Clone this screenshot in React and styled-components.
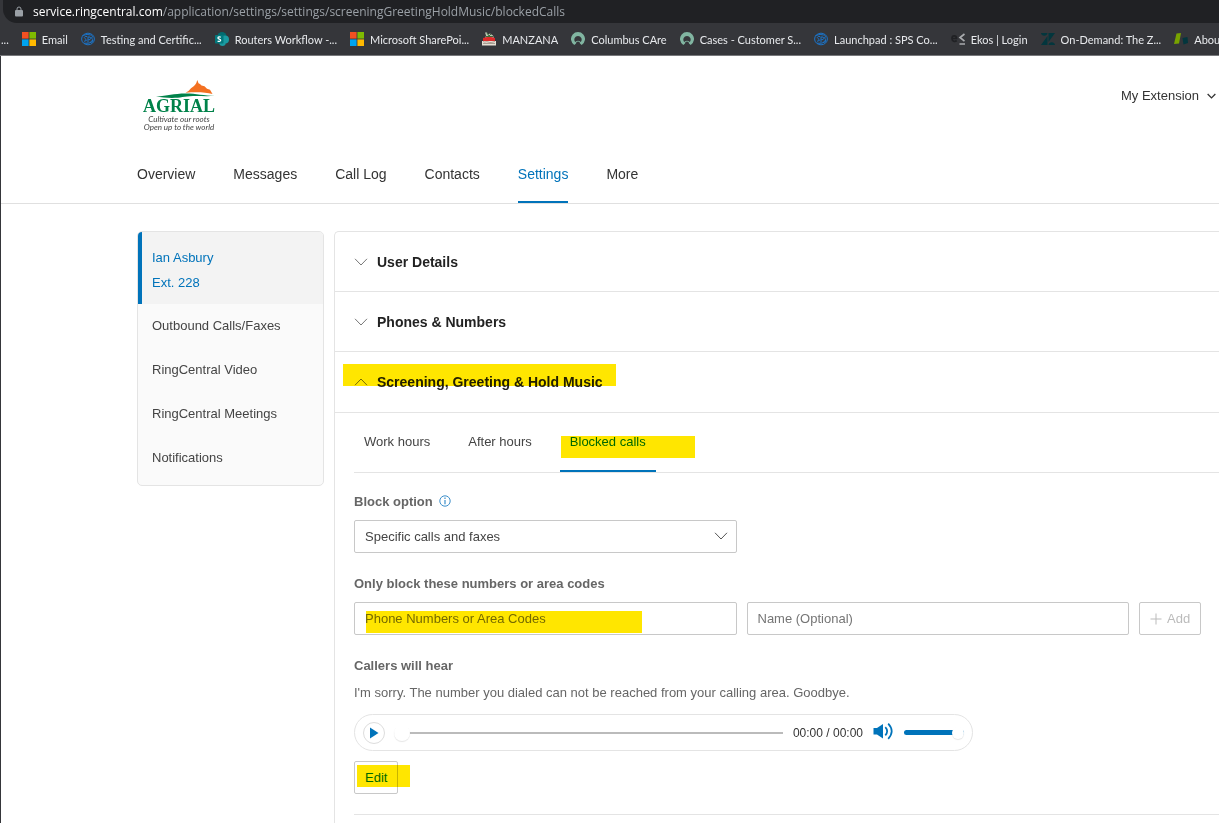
import React, { useState } from "react";
import styled, { createGlobalStyle, css } from "styled-components";

const bookmarks = [
  { label: "Email", icon: "microsoft" },
  { label: "Testing and Certific...", icon: "sps" },
  { label: "Routers Workflow -...", icon: "sharepoint" },
  { label: "Microsoft SharePoi...", icon: "microsoft" },
  { label: "MANZANA", icon: "cake" },
  { label: "Columbus CAre", icon: "ring" },
  { label: "Cases - Customer S...", icon: "ring" },
  { label: "Launchpad : SPS Co...", icon: "sps" },
  { label: "Ekos | Login", icon: "ekos" },
  { label: "On-Demand: The Z...", icon: "zendesk" },
  { label: "Abou", icon: "leaf" },
];

const navItems = [
  "Overview",
  "Messages",
  "Call Log",
  "Contacts",
  "Settings",
  "More",
];

const sideItems = [
  "Outbound Calls/Faxes",
  "RingCentral Video",
  "RingCentral Meetings",
  "Notifications",
];

const tabs = ["Work hours", "After hours", "Blocked calls"];

const App = () => {
  const [tab, setTab] = useState("Blocked calls");
  const [position, setPosition] = useState(0);
  const [volume, setVolume] = useState(100);

  return (
    <>
      <GlobalStyle />
      <BrowserBar>
        <AddressBar>
          <LockIcon />
          <span>
            <Host>service.ringcentral.com</Host>
            /application/settings/settings/screeningGreetingHoldMusic/blockedCalls
          </span>
        </AddressBar>
        <Bookmarks>
          <span>...</span>
          {bookmarks.map(({ label, icon }) => (
            <Bookmark href="#" key={label}>
              <BookmarkIcon name={icon} />
              {label}
            </Bookmark>
          ))}
        </Bookmarks>
      </BrowserBar>
      <Page>
        <Header>
          <HeaderTop>
            <Logo />
            <ExtensionButton type="button">
              My Extension
              <Chevron width={9} height={6} strokeWidth={1.3} />
            </ExtensionButton>
          </HeaderTop>
          <Nav>
            {navItems.map((item) => (
              <NavLink href="#" key={item} $active={item === "Settings"}>
                {item}
              </NavLink>
            ))}
          </Nav>
        </Header>
        <Content>
          <Sidebar>
            <CurrentUser href="#">
              Ian Asbury
              <br />
              Ext. 228
            </CurrentUser>
            {sideItems.map((item) => (
              <SideLink href="#" key={item}>
                {item}
              </SideLink>
            ))}
          </Sidebar>
          <Panel>
            <SectionButton type="button">
              <Chevron />
              User Details
            </SectionButton>
            <SectionButton type="button">
              <Chevron />
              Phones &amp; Numbers
            </SectionButton>
            <SectionButton type="button" aria-expanded="true" $open>
              <Chevron up />
              Screening, Greeting &amp; Hold Music
              <Marker $left={8} $top={12} $width={273} />
            </SectionButton>
            <SectionBody>
              <Tabs role="tablist">
                {tabs.map((item) => (
                  <Tab
                    type="button"
                    role="tab"
                    key={item}
                    aria-selected={item === tab}
                    $active={item === tab}
                    onClick={() => setTab(item)}
                  >
                    {item}
                    {item === "Blocked calls" && (
                      <Marker $left={1} $top={23} $width={134} />
                    )}
                  </Tab>
                ))}
              </Tabs>
              <Form onSubmit={(e) => e.preventDefault()}>
                <LabelRow>
                  <Label htmlFor="block-option">Block option</Label>
                  <InfoIcon />
                </LabelRow>
                <FieldRow>
                  <SelectBox>
                    <Select id="block-option" defaultValue="specific">
                      <option value="specific">Specific calls and faxes</option>
                      <option value="all">All calls and faxes</option>
                    </Select>
                    <Chevron />
                  </SelectBox>
                </FieldRow>
                <LabelRow>
                  <Label htmlFor="numbers">
                    Only block these numbers or area codes
                  </Label>
                </LabelRow>
                <FieldRow>
                  <InputBox>
                    <Input
                      id="numbers"
                      placeholder="Phone Numbers or Area Codes"
                    />
                    <Marker $left={12} $top={9} $width={276} />
                  </InputBox>
                  <InputBox>
                    <Input
                      aria-label="Name (Optional)"
                      placeholder="Name (Optional)"
                    />
                  </InputBox>
                  <Button type="submit" disabled>
                    <PlusIcon />
                    Add
                  </Button>
                </FieldRow>
                <LabelRow>
                  <Label as="h3">Callers will hear</Label>
                </LabelRow>
                <Message>
                  I'm sorry. The number you dialed can not be reached from your
                  calling area. Goodbye.
                </Message>
                <Player>
                  <PlayButton type="button" aria-label="Play">
                    <svg width="10" height="12" viewBox="0 0 10 12">
                      <path d="M1 0.5 9.5 6 1 11.5Z" fill="#0073ba" />
                    </svg>
                  </PlayButton>
                  <SeekSlider
                    type="range"
                    aria-label="Position"
                    value={position}
                    onChange={(e) => setPosition(+e.target.value)}
                  />
                  <Time>00:00 / 00:00</Time>
                  <VolumeIcon />
                  <VolumeSlider
                    type="range"
                    aria-label="Volume"
                    value={volume}
                    onChange={(e) => setVolume(+e.target.value)}
                  />
                </Player>
                <Button type="button">
                  Edit
                  <Marker $left={2} $top={3} $width={53} />
                </Button>
              </Form>
              <Divider />
            </SectionBody>
          </Panel>
        </Content>
      </Page>
    </>
  );
};

export default App;

const Chevron = ({ up, width = 14, height = 8, strokeWidth = 1 }) => (
  <svg
    width={width}
    height={height}
    viewBox="0 0 14 8"
    fill="none"
    stroke="currentColor"
    strokeWidth={(strokeWidth * 14) / width}
    aria-hidden="true"
  >
    <path d={up ? "M1 7.2 7 1l6 6.2" : "M1 0.8 7 7l6-6.2"} />
  </svg>
);

const LockIcon = () => (
  <svg width="8" height="11" viewBox="0 0 8 11" aria-hidden="true">
    <path d="M2 5V3a2 2 0 0 1 4 0v2" fill="none" stroke="#9aa0a6" />
    <rect y="4" width="8" height="6.5" rx="1" fill="#9aa0a6" />
  </svg>
);

const PlusIcon = () => (
  <svg width="12" height="12" viewBox="0 0 12 12" aria-hidden="true">
    <path d="M6 0.5v11M0.5 6h11" stroke="currentColor" />
  </svg>
);

const InfoIcon = () => (
  <svg width="12" height="12" viewBox="0 0 12 12" aria-hidden="true">
    <circle cx="6" cy="6" r="5.2" fill="none" stroke="#3d8fca" />
    <path d="M6 2.6v1.3M6 5v4.2" stroke="#3d8fca" strokeWidth="1.2" />
  </svg>
);

const VolumeIcon = () => (
  <svg width="21" height="22" viewBox="0 0 21 22" aria-hidden="true">
    <path d="M0.5 6h3.5L10 2v14.5L4 12.5H0.5Z" fill="#0073ba" />
    <path
      d="M12.3 5.2q3.7 4 0 8.2M15.2 1.7q7 7.5 0 15.2"
      fill="none"
      stroke="#0073ba"
      strokeWidth="1.7"
    />
  </svg>
);

const Logo = () => (
  <svg width="76" height="54" viewBox="0 0 76 54" role="img" aria-label="Agrial">
    <path
      d="M44.5 12.8 47.5 11 50 8.3 53 6l1.5-1.8.8-1.2L56.3 0l1.2 3.300 1.500.7L60.500 5.500l3 .7 2.500 2.500 3 1 2.500 4.200c-7-1.600-16-2-27-1.100Z"
      fill="#f37021"
    />
    <path
      d="M15 16.5c12-.5 17-3 30-3 10 0 18 2.3 29 2.3-8 .8-15 0-22 .2-9 .4-12 1.9-21 1.9-6 0-11-.5-16-1.4Z"
      fill="#00824a"
    />
    <LogoName x="38" y="32">
      AGRIAL
    </LogoName>
    <LogoTagline x="38" y="42">
      Cultivate our roots
    </LogoTagline>
    <LogoTagline x="38" y="50">
      Open up to the world
    </LogoTagline>
  </svg>
);

const bookmarkDrawings = {
  microsoft: (
    <>
      <path d="M0 0h6.6v6.6H0Z" fill="#f25022" />
      <path d="M7.4 0H14v6.6H7.4Z" fill="#7fba00" />
      <path d="M0 7.4h6.6V14H0Z" fill="#00a4ef" />
      <path d="M7.4 7.4H14V14H7.4Z" fill="#ffb900" />
    </>
  ),
  sps: (
    <g fill="none" stroke="#1b74c9" strokeWidth="1">
      <ellipse cx="7" cy="7" rx="6.4" ry="5.8" />
      <path d="M6.3 4.5H4.2Q2.5 5.5 4 6.6t1.5 1.8L3 9.3M7 10.5V5h2q1.5 1.3 0 2.6H7.3M12 4.500q-2 .4-1.200 1.700T12 8.200L9.500 9.800" />
      <path d="M1.5 3.5Q6 1.5 11 3.2M3 11.3q5 .6 9-1.8" />
    </g>
  ),
  sharepoint: (
    <>
      <circle cx="7" cy="4.5" r="4.5" fill="#036c70" />
      <circle cx="10" cy="7.5" r="4" fill="#1a9ba1" />
      <circle cx="7.5" cy="10.8" r="3.2" fill="#1a9ba1" />
      <rect y="3" width="8.5" height="8.5" rx="0.8" fill="#03787c" />
      <path
        d="M5.8 5.300c-1-.7-2.900-.5-2.900.7 0 1.300 2.800 1 2.800 2.300 0 1.200-2.100 1.300-3.100.6"
        fill="none"
        stroke="#fff"
        strokeWidth="1.2"
      />
    </>
  ),
  cake: (
    <>
      <path d="M3 0.5h2l1 2 2-1 3 2 1 3H3l1-3Z" fill="#b9c7b3" />
      <path d="m5 1 2 3 2-2M4 4.5h7" stroke="#3d6b3a" fill="none" />
      <path d="M1 6c3-1.5 9-1.5 12 0v3H1Z" fill="#dd2a2a" />
      <path d="M0 9h14v4.5H0Z" fill="#e6dfd4" />
      <path
        d="M1 9.5c2 1.5 3-.5 5 .5s4 .5 7-.5M1 11.5h12"
        stroke="#8d8175"
        fill="none"
        strokeWidth="0.7"
      />
    </>
  ),
  ring: (
    <path
      d="M3.3 13A7 7 0 1 1 10.7 13L9 11.5a2 2 0 0 0-4 0ZM7 4a3.6 3.6 0 0 0-2.7 6 4 4 0 0 1 5.4 0A3.6 3.6 0 0 0 7 4Z"
      fill="#81b5a1"
      fillRule="evenodd"
    />
  ),
  ekos: (
    <g fill="none" strokeWidth="1.7">
      <path
        d="M1 6.5h4.5C5.5 3 1 3 1 6.5c0 3 3 3.5 4.7 2"
        stroke="#202124"
      />
      <path d="M13.5 2 9 5.5l4.5 3.7M8.5 12h5.5" stroke="#a9abae" />
    </g>
  ),
  zendesk: (
    <path
      d="M0 1h6.5A3.3 3.3 0 0 1 0 1ZM6.5 4v9H0ZM7.5 1H14L7.5 10ZM7.5 13a3.3 3.3 0 0 1 6.5 0Z"
      fill="#03363d"
    />
  ),
  leaf: (
    <>
      <path d="M2.5 1.5 7 1 5 11.5 0 12Z" fill="#78a300" />
      <path d="m8.5 6 5-1 .5 6-4.5 1.5Z" fill="#03363d" />
    </>
  ),
};

const BookmarkIcon = ({ name }) => (
  <svg width="14" height="14" viewBox="0 0 14 14" aria-hidden="true">
    {bookmarkDrawings[name]}
  </svg>
);

const GlobalStyle = createGlobalStyle`
  * {
    box-sizing: border-box;
  }

  body {
    margin: 0;
    background-color: #fff;
    color: #444;
    font-family: "Liberation Sans", Arial, sans-serif;
    font-size: 13px;
    overflow: hidden;
  }

  button, input, select {
    font: inherit;
    color: inherit;
  }

  a {
    color: inherit;
    text-decoration: none;
  }

  svg {
    flex-shrink: 0;
  }
`;

const BrowserBar = styled.div`
  background-color: #35363a;
  border-bottom: 1px solid #77787b;
  color: #e8eaed;
  white-space: nowrap;
  overflow: hidden;
`;

const AddressBar = styled.div`
  display: flex;
  align-items: center;
  gap: 10px;
  height: 23px;
  margin-left: 3px;
  padding-left: 12px;
  background-color: #202124;
  border-bottom-left-radius: 14px;
  color: #9aa0a6;
  font-family: "Open Sans", sans-serif;
  font-size: 12px;
`;

const Host = styled.span`
  color: #fff;
`;

const Bookmarks = styled.div`
  display: flex;
  align-items: center;
  gap: 13px;
  height: 32px;
  padding-left: 1px;
  font-family: Lato, sans-serif;
  font-size: 11px;
`;

const Bookmark = styled.a`
  display: flex;
  align-items: center;
  gap: 6px;
`;

const Page = styled.div`
  border-left: 1px solid #35363a;
`;

const Header = styled.header`
  border-bottom: 1px solid #e0e0e0;
`;

const HeaderTop = styled.div`
  display: flex;
  justify-content: space-between;
  align-items: flex-start;
  padding: 24px 3px 0 140px;
`;

const LogoName = styled.text`
  font-family: "Liberation Serif", serif;
  font-size: 18px;
  font-weight: 700;
  fill: #00824a;
  text-anchor: middle;
`;

const LogoTagline = styled.text`
  font-family: Lato, sans-serif;
  font-size: 8px;
  font-style: italic;
  fill: #444;
  text-anchor: middle;
`;

const ExtensionButton = styled.button`
  display: flex;
  align-items: center;
  gap: 8px;
  padding: 8px 0;
  border: none;
  background: none;
  color: #333;
`;

const Nav = styled.nav`
  display: flex;
  gap: 38px;
  padding: 10px 0 0 136px;
`;

const NavLink = styled.a`
  padding: 22px 0 19px;
  border-bottom: 2px solid ${({ $active }) => ($active ? "#0073ba" : "transparent")};
  color: ${({ $active }) => ($active ? "#0073ba" : "#333")};
  font-size: 14px;
  line-height: 16px;
`;

const Content = styled.main`
  display: flex;
  align-items: flex-start;
  gap: 10px;
  padding: 27px 0 0 136px;
`;

const Sidebar = styled.aside`
  width: 187px;
  flex-shrink: 0;
  padding-bottom: 5px;
  border: 1px solid #e4e4e4;
  border-radius: 5px;
  background-color: #fafafa;
  overflow: hidden;
`;

const SideLink = styled.a`
  display: block;
  padding-left: 14px;
  line-height: 44px;
`;

const CurrentUser = styled.a`
  display: block;
  padding: 13px 0 9px 10px;
  border-left: 4px solid #0073ba;
  background-color: #f3f3f3;
  color: #0073ba;
  line-height: 25px;
`;

const Panel = styled.section`
  flex: 1;
  min-width: 0;
  border: 1px solid #e4e4e4;
  border-right: none;
  border-radius: 5px 0 0 0;
`;

const SectionButton = styled.button`
  position: relative;
  display: flex;
  align-items: center;
  gap: 9px;
  width: 100%;
  height: ${({ $open }) => ($open ? 61 : 60)}px;
  padding: 0 19px;
  border: none;
  border-bottom: 1px solid #e4e4e4;
  background: none;
  color: #222;
  font-size: 14px;
  font-weight: 700;

  svg {
    color: #777;
  }
`;

/* highlighter stroke drawn over a control */
const Marker = styled.span`
  position: absolute;
  left: ${({ $left }) => $left}px;
  top: ${({ $top }) => $top}px;
  width: ${({ $width }) => $width}px;
  height: 22px;
  background-color: #ffe600;
  mix-blend-mode: multiply;
  pointer-events: none;
`;

const SectionBody = styled.div`
  padding-left: 19px;
`;

const Tabs = styled.div`
  display: flex;
  gap: 18px;
  height: 60px;
  border-bottom: 1px solid #e4e4e4;
`;

const Tab = styled.button`
  position: relative;
  padding: 0 10px;
  border: none;
  border-bottom: 2px solid ${({ $active }) => ($active ? "#0073ba" : "transparent")};
  background: none;
  color: ${({ $active }) => ($active ? "#0073ba" : "#444")};
`;

const Form = styled.form`
  padding: 18px 18px 20px 0;
`;

const LabelRow = styled.div`
  display: flex;
  align-items: center;
  gap: 6px;
  height: 20px;
  margin-bottom: 9px;
`;

const Label = styled.label`
  margin: 0;
  color: #666;
  font-size: 13px;
  font-weight: 700;
`;

const FieldRow = styled.div`
  display: grid;
  grid-template-columns: 1fr 1fr 62px;
  gap: 10px;
  margin-bottom: 20px;
`;

const field = css`
  width: 100%;
  height: 33px;
  border: 1px solid #c8c8c8;
  border-radius: 2px;
  background-color: #fff;
`;

const SelectBox = styled.div`
  position: relative;

  svg {
    position: absolute;
    right: 9px;
    top: 12px;
    color: #555;
    pointer-events: none;
  }
`;

const Select = styled.select`
  ${field}
  display: block;
  padding: 0 10px;
  appearance: none;
`;

const InputBox = styled.div`
  position: relative;
`;

const Input = styled.input`
  ${field}
  display: block;
  padding: 0 10px;

  &::placeholder {
    color: #757575;
    opacity: 1;
  }
`;

const Button = styled.button`
  position: relative;
  display: flex;
  align-items: center;
  gap: 5px;
  height: 33px;
  padding: 0 10px;
  border: 1px solid #c8c8c8;
  border-radius: 2px;
  background-color: #fff;
  color: #0073ba;

  &:disabled {
    color: #bbb;
  }
`;

const Message = styled.p`
  margin: 0 0 12px;
  color: #666;
  line-height: 18px;
`;

const Player = styled.div`
  display: flex;
  align-items: center;
  width: 100%;
  max-width: 619px;
  height: 37px;
  margin-bottom: 10px;
  padding: 0 8px;
  border: 1px solid #e4e4e4;
  border-radius: 19px;
`;

const PlayButton = styled.button`
  display: flex;
  align-items: center;
  justify-content: center;
  width: 22px;
  height: 22px;
  padding: 0;
  border: 1px solid #ddd;
  border-radius: 50%;
  background: none;
`;

const slider = css`
  height: 16px;
  background: transparent;
  appearance: none;

  &::-webkit-slider-thumb {
    width: 16px;
    height: 16px;
    border-radius: 50%;
    background-color: #fff;
    box-shadow: 0 1px 1px rgba(0, 0, 0, 0.1);
    appearance: none;
  }
`;

const SeekSlider = styled.input`
  ${slider}
  flex: 1;
  min-width: 0;
  margin: 0 10px 0 9px;

  &::-webkit-slider-runnable-track {
    height: 2px;
    background-color: #bbb;
  }

  &::-webkit-slider-thumb {
    margin-top: -7px;
  }
`;

const Time = styled.span`
  margin-right: 10px;
  color: #333;
  font-size: 12px;
`;

const VolumeSlider = styled.input`
  ${slider}
  width: 60px;
  margin: 0 0 0 10px;

  &::-webkit-slider-runnable-track {
    height: 5px;
    border-radius: 3px;
    background-color: #0073ba;
  }

  &::-webkit-slider-thumb {
    width: 12px;
    height: 12px;
    margin-top: -3px;
  }
`;

const Divider = styled.hr`
  margin: 0 0 20px;
  border: none;
  border-top: 1px solid #e4e4e4;
`;
